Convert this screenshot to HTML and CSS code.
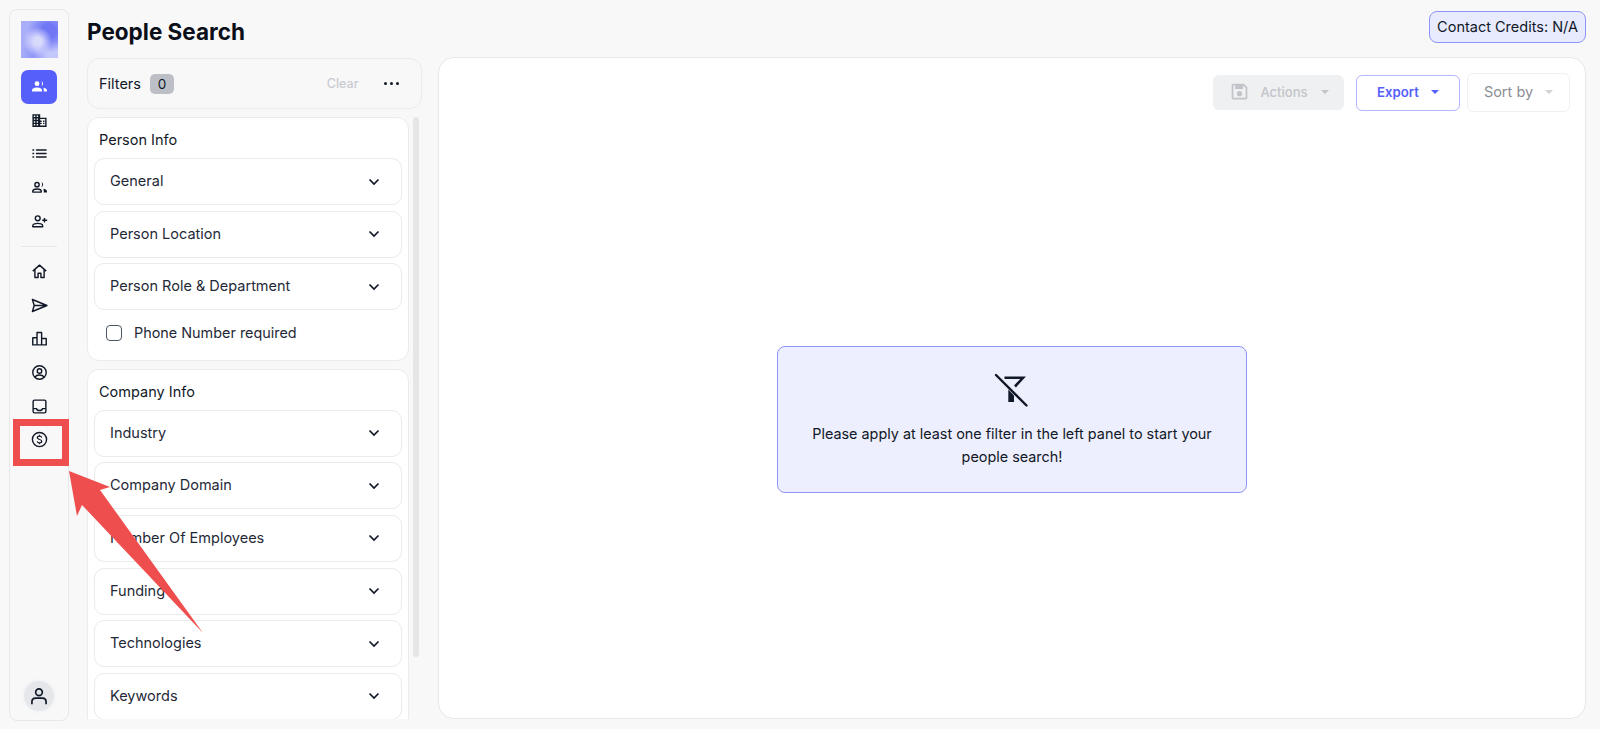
FILE: index.html
```html
<!DOCTYPE html>
<html lang="en">
  <head>
    <meta charset="utf-8">
    <title>People Search</title>
    <link rel="stylesheet" href="styles.css">
  </head>
  <body>
    <nav class="sidebar">
      <div class="logo"></div>
      <a class="nav-item active">
        <svg viewBox="0 0 24 24"><circle cx="8.500" cy="8" r="3.400" class="solid"/><path class="solid" d="M1.500 19v-1.800c0-2.700 4-3.800 7-3.800s7 1.100 7 3.800V19z"/><path class="solid" d="M14.500 4.700a3.400 3.400 0 0 1 0 6.600c.8-.9 1.200-2.100 1.200-3.300s-.4-2.400-1.200-3.300zM17.500 13.700c2.700.5 5 1.600 5 3.600V19h-4.500v-1.800c0-1.400-.1-2.500-.5-3.500z"/></svg>
      </a>
      <a class="nav-item">
        <svg viewBox="0 0 24 24"><path class="solid" d="M2 3h11v5h9v13H2zm2 2v2h2V5zm4 0v2h2V5zM4 9v2h2V9zm4 0v2h2V9zM4 13v2h2v-2zm4 0v2h2v-2zM4 17v2h2v-2zm4 0v2h2v-2zm5-7v2h2v2h-2v1h2v2h-2v2h7v-9zm4 2h2v2h-2zm0 3h2v2h-2z" fill-rule="evenodd"/></svg>
      </a>
      <a class="nav-item">
        <svg viewBox="0 0 24 24"><path class="solid" d="M2 6h2.500v2H2zm5 0h15v2H7zM2 11h2.500v2H2zm5 0h15v2H7zM2 16h2.500v2H2zm5 0h15v2H7z"/></svg>
      </a>
      <a class="nav-item">
        <svg viewBox="0 0 24 24"><circle cx="8.500" cy="8" r="3" class="line"/><path class="line" d="M2.500 18.500v-1.100c0-2.200 3.400-3.200 6-3.200s6 1 6 3.200v1.100z"/><path class="solid" d="M14.500 4.700a3.400 3.400 0 0 1 0 6.600c.8-.9 1.200-2.100 1.200-3.300s-.4-2.400-1.200-3.300zM17.500 13.700c2.700.5 5 1.600 5 3.600V19h-4.500v-1.800c0-1.400-.1-2.500-.5-3.500z"/></svg>
      </a>
      <a class="nav-item">
        <svg viewBox="0 0 24 24"><circle cx="9.500" cy="7.500" r="3.400" class="line"/><path class="line" d="M2.500 19.500v-1.300c0-2.400 4.400-3.600 7-3.600s7 1.200 7 3.600v1.300z"/><path class="line" d="M19 7v6.500M15.800 10.200h7"/></svg>
      </a>
      <div class="nav-divider"></div>
      <a class="nav-item">
        <svg viewBox="0 0 24 24"><path class="line" d="M2.500 11.500 12 3l9.500 8.500M5.500 9.500V20.500h4.500v-6h4v6h4.500V9.500"/></svg>
      </a>
      <a class="nav-item">
        <svg viewBox="0 0 24 24"><path class="line" d="M2 3.500 22.500 12 2 20.500l2.500-8.500zM4.500 12h18"/></svg>
      </a>
      <a class="nav-item">
        <svg viewBox="0 0 24 24"><path class="line" d="M2.500 21V11h6V3.500h6.500V12h6.500v9zM8.500 11v10M15 12v9"/></svg>
      </a>
      <a class="nav-item">
        <svg viewBox="0 0 24 24"><circle cx="12" cy="12" r="9.500" class="line"/><circle cx="12" cy="9.800" r="3.200" class="line"/><path class="line" d="M5.500 18.500c1.300-2 3.800-3 6.500-3s5.200 1 6.500 3"/></svg>
      </a>
      <a class="nav-item">
        <svg viewBox="0 0 24 24"><rect x="3" y="3" width="18" height="18" rx="2" class="line"/><path class="line" d="M3 15h5c0 1.600 1.800 2.600 4 2.600s4-1 4-2.600h5"/></svg>
      </a>
      <a class="nav-item">
        <svg viewBox="0 0 24 24"><circle cx="12" cy="12" r="10" class="line"/><path class="line thin" d="M15.200 9.200c-.4-1.200-1.700-1.900-3.200-1.900-1.700 0-3.100.9-3.100 2.300 0 3 6.300 1.800 6.300 4.800 0 1.500-1.500 2.300-3.200 2.300-1.600 0-2.900-.7-3.300-2M12 5.200v2.100M12 16.700v2.100"/></svg>
      </a>
      <div class="avatar">
        <svg viewBox="0 0 24 24"><circle cx="12" cy="7.500" r="4" class="line"/><path class="line" d="M3.500 22v-3c0-3 2-4.500 4.500-4.500h8c2.500 0 4.500 1.500 4.500 4.500v3"/></svg>
      </div>
    </nav>

    <div class="page">
      <header class="page-head">
        <h1>People Search</h1>
        <span class="credits">Contact Credits: N/A</span>
      </header>
      <div class="columns">
        <aside class="filters">
          <div class="filters-bar">
            <span class="filters-label">Filters</span>
            <span class="filters-count">0</span>
            <span class="filters-clear">Clear</span>
            <span class="filters-more"><i></i><i></i><i></i></span>
          </div>
          <div class="filters-scroll">
            <div class="filters-list">
              <section class="filter-card">
                <h2>Person Info</h2>
                <div class="filter-row">General<svg viewBox="0 0 12 8"><path d="M1.500 1.500 6 6l4.500-4.500"/></svg></div>
                <div class="filter-row">Person Location<svg viewBox="0 0 12 8"><path d="M1.500 1.500 6 6l4.500-4.500"/></svg></div>
                <div class="filter-row">Person Role &amp; Department<svg viewBox="0 0 12 8"><path d="M1.500 1.500 6 6l4.500-4.500"/></svg></div>
                <label class="filter-check"><span class="checkbox"></span>Phone Number required</label>
              </section>
              <section class="filter-card">
                <h2>Company Info</h2>
                <div class="filter-row">Industry<svg viewBox="0 0 12 8"><path d="M1.500 1.500 6 6l4.500-4.500"/></svg></div>
                <div class="filter-row">Company Domain<svg viewBox="0 0 12 8"><path d="M1.500 1.500 6 6l4.500-4.500"/></svg></div>
                <div class="filter-row">Number Of Employees<svg viewBox="0 0 12 8"><path d="M1.500 1.500 6 6l4.500-4.500"/></svg></div>
                <div class="filter-row">Funding<svg viewBox="0 0 12 8"><path d="M1.500 1.500 6 6l4.500-4.500"/></svg></div>
                <div class="filter-row">Technologies<svg viewBox="0 0 12 8"><path d="M1.500 1.500 6 6l4.500-4.500"/></svg></div>
                <div class="filter-row">Keywords<svg viewBox="0 0 12 8"><path d="M1.500 1.500 6 6l4.500-4.500"/></svg></div>
              </section>
            </div>
            <div class="scroll-thumb"></div>
          </div>
        </aside>
        <main class="results">
          <div class="toolbar">
            <button class="btn btn-actions">
              <svg viewBox="0 0 24 24"><path d="M3 5a2 2 0 0 1 2-2h12l4 4v12a2 2 0 0 1-2 2H5a2 2 0 0 1-2-2zm2 0v14h14V8l-3-3v4H7V5zm7 6.500a3 3 0 1 0 0 6 3 3 0 0 0 0-6z" fill-rule="evenodd"/></svg>
              Actions<span class="caret"></span>
            </button>
            <button class="btn btn-export">Export<span class="caret"></span></button>
            <button class="btn btn-sort">Sort by<span class="caret"></span></button>
          </div>
          <div class="empty-wrap">
            <div class="empty-box">
              <svg viewBox="0 0 36 36"><path class="bar" d="M10.500 4.800H29L21 13.500"/><path class="fill" d="M14.300 16.500 20 22.500V29h-5.700z"/><path class="cross" d="M2 2l30.500 30.500"/></svg>
              <p>Please apply at least one filter in the left panel to start your people search!</p>
            </div>
          </div>
        </main>
      </div>
    </div>

    <div class="callout-box"></div>
    <svg class="callout-arrow" viewBox="0 0 1600 729"><polygon points="69,471 110,487 100,490 203,633 82,505 77,516"/></svg>
  </body>
</html>
```

FILE: styles.css
```css
* {
  box-sizing: border-box;
}
html, body {
  height: 100%;
}
body {
  margin: 0;
  display: flex;
  height: 729px;
  overflow: hidden;
  background: #f8f8f8;
  color: #111827;
  font-family: Inter, "Liberation Sans", sans-serif;
  font-size: 14px;
}

/* left rail */
.sidebar {
  flex: none;
  width: 60px;
  height: 712px;
  margin: 9px 0 0 9px;
  padding: 11px 0 9px;
  display: flex;
  flex-direction: column;
  align-items: center;
  background: #f8f8f8;
  border: 1px solid #e8e8ea;
  border-radius: 8px;
}
.logo {
  width: 37px;
  height: 37px;
  margin-bottom: 12px;
  flex: none;
  background:
    radial-gradient(circle at 45% 55%, #d8dafc 0 14%, transparent 50%),
    radial-gradient(circle at 75% 28%, #6f77f5 0 18%, transparent 55%),
    radial-gradient(circle at 85% 85%, #c4c7fb 0 12%, transparent 45%),
    radial-gradient(circle at 50% 90%, #8f96f7 0 14%, transparent 50%),
    #a9aef9;
}
.nav-item {
  width: 36px;
  height: 33.600px;
  flex: none;
  display: flex;
  align-items: center;
  justify-content: center;
  border-radius: 7px;
}
.nav-item svg {
  width: 17px;
  height: 17px;
}
.nav-item.active {
  background: #575ffb;
  color: #fff;
}
.nav-divider {
  width: 36px;
  height: 1px;
  margin: 8px 0;
  flex: none;
  background: #e8e8ea;
}
.solid {
  fill: currentColor;
}
.line {
  fill: none;
  stroke: currentColor;
  stroke-width: 2;
  stroke-linejoin: round;
}
.line.thin {
  stroke-width: 1.700;
}
.avatar {
  width: 30px;
  height: 30px;
  margin-top: auto;
  display: flex;
  align-items: center;
  justify-content: center;
  border-radius: 50%;
  background: #e5e7eb;
  box-shadow: 0 0 0 2px #f3f4f6;
}
.avatar svg {
  width: 20px;
  height: 20px;
}

/* page */
.page {
  flex: 1;
  min-width: 0;
  padding: 11px 14px 0 18px;
  display: flex;
  flex-direction: column;
}
.page-head {
  height: 46px;
  display: flex;
  justify-content: space-between;
  align-items: flex-start;
}
.page-head h1 {
  margin: 8px 0 0;
  font-size: 22.500px;
  line-height: 26px;
  font-weight: 700;
  color: #0b0f19;
}
.credits {
  height: 32px;
  padding: 0 7px 2px;
  display: flex;
  align-items: center;
  background: #e8eafd;
  border: 1px solid #8f94f8;
  border-radius: 8px;
  font-size: 14.500px;
}
.columns {
  flex: 1;
  min-height: 0;
  display: flex;
  gap: 16px;
}

/* filter column */
.filters {
  width: 335px;
  flex: none;
  height: 662px;
  display: flex;
  flex-direction: column;
  gap: 8px;
}
.filters-bar {
  height: 51px;
  flex: none;
  margin-top: 1px;
  padding: 0 22px 0 11px;
  display: flex;
  align-items: center;
  border: 1px solid #ebebeb;
  border-radius: 12px;
}
.filters-label {
  padding-bottom: 1px;
  font-size: 14.500px;
}
.filters-count {
  margin-left: 9px;
  width: 24px;
  height: 20px;
  display: flex;
  align-items: center;
  justify-content: center;
  background: #bcc0c6;
  border-radius: 5px;
  font-size: 13.500px;
}
.filters-clear {
  margin-left: auto;
  font-size: 12.500px;
  font-weight: 500;
  color: #c9cbd0;
}
.filters-more {
  margin-left: 25px;
  display: flex;
  gap: 2.500px;
}
.filters-more i {
  width: 3.500px;
  height: 3.500px;
  border-radius: 50%;
  background: #111827;
}
.filters-scroll {
  flex: 1;
  min-height: 0;
  display: flex;
  gap: 4px;
  overflow: hidden;
}
.filters-list {
  width: 322px;
  flex: none;
  display: flex;
  flex-direction: column;
  gap: 8px;
}
.scroll-thumb {
  width: 6px;
  height: 540px;
  background: #e6e6e6;
  border-radius: 3px;
}
.filter-card {
  padding: 0 6px 7px;
  background: #fff;
  border: 1px solid #ebebeb;
  border-radius: 12px;
}
.filter-card h2 {
  margin: 0;
  height: 40px;
  padding: 3px 5px 0;
  display: flex;
  align-items: center;
  font-size: 14.500px;
  font-weight: 400;
}
.filter-row {
  height: 47px;
  margin-bottom: 5.600px;
  padding: 0 21px 2px 15px;
  display: flex;
  align-items: center;
  justify-content: space-between;
  border: 1px solid #ebebeb;
  border-radius: 10px;
  font-size: 14.500px;
  color: #1f2937;
}
.filter-row svg {
  width: 12px;
  height: 8px;
  margin-top: 2px;
  fill: none;
  stroke: #111827;
  stroke-width: 1.700;
}
.filter-check {
  height: 34px;
  margin-bottom: 3px;
  padding: 0 12px;
  display: flex;
  align-items: center;
  gap: 12px;
  font-size: 14.400px;
  color: #1f2937;
}
.checkbox {
  width: 16px;
  height: 16px;
  background: #fff;
  border: 1.500px solid #4b5563;
  border-radius: 4px;
}

/* results panel */
.results {
  flex: 1;
  min-width: 0;
  height: 662px;
  display: flex;
  flex-direction: column;
  background: #fff;
  border: 1px solid #e8e8e8;
  border-radius: 16px;
}
.toolbar {
  padding: 15px 15px 0 0;
  display: flex;
  align-items: center;
  justify-content: flex-end;
  gap: 7px;
}
.btn {
  display: flex;
  align-items: center;
  justify-content: center;
  padding: 0 0 2px;
  font-family: inherit;
  font-size: 13px;
  background: #fff;
  border-radius: 6px;
}
.caret {
  width: 0;
  height: 0;
  margin-left: 12px;
  border-left: 4px solid transparent;
  border-right: 4px solid transparent;
  border-top: 4px solid currentColor;
}
.btn-actions {
  width: 131px;
  height: 35px;
  margin-right: 5px;
  gap: 11px;
  background: #eff0f1;
  border: none;
  color: #c2c4c9;
  font-weight: 500;
}
.btn-actions svg {
  width: 21px;
  height: 21px;
  fill: #c2c4c9;
}
.btn-actions .caret {
  margin-left: 2px;
}
.btn-export {
  width: 104px;
  height: 36px;
  border: 1px solid #b3b6fb;
  color: #575ffb;
  font-size: 13.200px;
  font-weight: 600;
}
.btn-sort {
  width: 103px;
  height: 39px;
  border: 1px solid #f0f0f0;
  color: #8b8e95;
  font-size: 14.500px;
}
.btn-sort .caret {
  color: #d0d2d6;
}
.empty-wrap {
  flex: 1;
  display: flex;
  align-items: flex-start;
  justify-content: center;
  padding-top: 234px;
}
.empty-box {
  width: 470px;
  height: 147px;
  padding: 26px 28px 0;
  display: flex;
  flex-direction: column;
  align-items: center;
  background: #eeeffe;
  border: 1px solid #8f94f8;
  border-radius: 8px;
  text-align: center;
}
.empty-box svg {
  width: 36px;
  height: 36px;
  flex: none;
}
.empty-box .fill {
  fill: #111827;
}
.empty-box .bar {
  fill: none;
  stroke: #111827;
  stroke-width: 2.600;
}
.empty-box .cross {
  fill: none;
  stroke: #111827;
  stroke-width: 2.400;
  stroke-linecap: round;
}
.empty-box p {
  margin: 13px 0 0;
  font-size: 14.400px;
  line-height: 23px;
}

/* annotation drawn over the screenshot */
.callout-box {
  position: absolute;
  left: 13px;
  top: 419px;
  width: 56px;
  height: 47px;
  border: 7px solid #ef4e4e;
}
.callout-arrow {
  position: absolute;
  left: 0;
  top: 0;
  width: 1600px;
  height: 729px;
  pointer-events: none;
}
.callout-arrow polygon {
  fill: #ef4e4e;
}
```
